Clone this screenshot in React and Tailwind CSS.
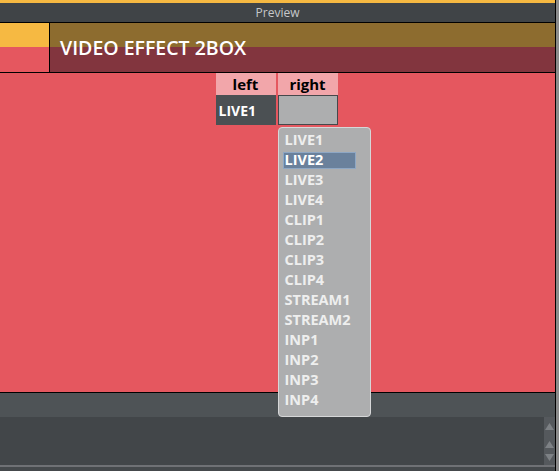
import React from "react";

const sources = [
  "LIVE1", "LIVE2", "LIVE3", "LIVE4",
  "CLIP1", "CLIP2", "CLIP3", "CLIP4",
  "STREAM1", "STREAM2",
  "INP1", "INP2", "INP3", "INP4",
];

function Arrow({ down }) {
  return (
    <svg width="9" height="7" viewBox="0 0 9 7" className="block">
      {down ? (
        <path d="M0 0h9L4.5 7z" fill="#7d8185" />
      ) : (
        <path d="M4.5 0L9 7H0z" fill="#7d8185" />
      )}
    </svg>
  );
}

export default function App() {
  const selected = "LIVE2";

  return (
    <div className="w-[559px] h-[471px] flex bg-[#45494c] font-['Open_Sans',sans-serif] overflow-hidden">
      {/* main column */}
      <div className="w-[556px] flex flex-col border-r border-black">
        <div className="h-[3px] bg-[#f6b942]" />

        {/* preview header */}
        <div className="h-[20px] bg-[#404447] border-b border-black flex items-center justify-center text-[12px] leading-none text-[#c6c8ca]">
          Preview
        </div>

        {/* effect title row */}
        <div className="h-[50px] flex border-b border-black">
          <div className="w-[50px] flex flex-col border-r border-black">
            <div className="h-[24px] bg-[#f6b942]" />
            <div className="flex-1 bg-[#e5575f]" />
          </div>
          <div className="flex-1 flex items-center pl-[10px] bg-[linear-gradient(to_bottom,#8d6c2f_0,#8d6c2f_24px,#82353e_24px)]">
            <span className="text-[19.5px] font-semibold text-white leading-none">
              VIDEO EFFECT 2BOX
            </span>
          </div>
        </div>

        {/* canvas */}
        <div className="h-[320px] bg-[#e5575f] border-b border-black flex justify-center pr-[2px]">
          <div className="relative self-start">
            <div className="grid grid-cols-[60px_60px] gap-x-[2px]">
              <div className="h-[22px] bg-[#f2a6aa] flex items-center justify-center text-[15px] font-bold text-black leading-none">
                left
              </div>
              <div className="h-[22px] bg-[#f2a6aa] flex items-center justify-center text-[15px] font-bold text-black leading-none">
                right
              </div>
              <div className="h-[30px] bg-[#4b5053] flex items-center pl-[3px] pt-[2px] text-[14px] font-bold text-white leading-none">
                LIVE1
              </div>
              <div className="h-[30px] bg-[#adaeaf] border border-[#45484b]" />
            </div>

            {/* open dropdown */}
            <div className="absolute left-[62px] top-[54px] w-[93px] h-[290px] bg-[#adaeaf] border border-[#d6d7d8] rounded-[4px] pt-[4px] px-[4px] flex flex-col gap-[3px] z-10">
              {sources.map((s) => (
                <div
                  key={s}
                  className={`h-[17px] w-[73px] flex items-center text-[14.5px] font-bold leading-none ${
                    s === selected
                      ? "bg-[#6a819c] border border-[#8ea7c4] pl-[1px] text-white"
                      : "pl-[2px] text-[#eeeeee]"
                  }`}
                >
                  {s}
                </div>
              ))}
            </div>
          </div>
        </div>

        {/* lower panels */}
        <div className="h-[24px] bg-[#4e5356]" />
        <div className="h-[48px] bg-[#424649] flex justify-end">
          <div className="w-[11px] bg-[#55595d] flex flex-col items-center pt-[6px] gap-[11px]">
            <Arrow />
            <Arrow />
            <div className="-mt-[5px]">
              <Arrow down />
            </div>
          </div>
        </div>
        <div className="h-[2px] bg-[#6f7175]" />
        <div className="flex-1 bg-[#45494c]" />
      </div>
      <div className="flex-1 bg-[#8b8b8b]" />
    </div>
  );
}
